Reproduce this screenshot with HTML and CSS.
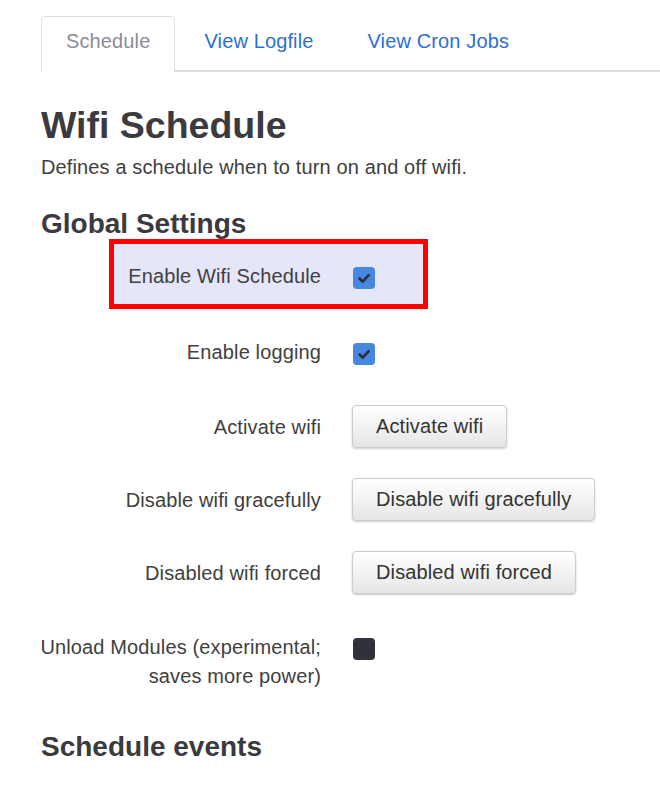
FILE: index.html
```html
<!DOCTYPE html>
<html lang="en">
<head>
    <meta charset="UTF-8">
    <meta name="viewport" content="width=device-width, initial-scale=1.0">
    <title>Wifi Schedule</title>
    <link rel="stylesheet" href="styles.css">
</head>
<body>
    <div class="page">
        <ul class="tabs">
            <li class="active"><a href="#">Schedule</a></li>
            <li><a href="#">View Logfile</a></li>
            <li><a href="#">View Cron Jobs</a></li>
        </ul>

        <h1>Wifi Schedule</h1>
        <p class="desc">Defines a schedule when to turn on and off wifi.</p>

        <h2 class="first">Global Settings</h2>

        <div class="row highlighted">
            <span class="mark"></span>
            <label class="label">Enable Wifi Schedule</label>
            <div class="field"><span class="check on"></span></div>
        </div>

        <div class="row tall">
            <label class="label">Enable logging</label>
            <div class="field"><span class="check on"></span></div>
        </div>

        <div class="row">
            <label class="label">Activate wifi</label>
            <div class="field"><button class="btn">Activate wifi</button></div>
        </div>

        <div class="row">
            <label class="label">Disable wifi gracefully</label>
            <div class="field"><button class="btn">Disable wifi gracefully</button></div>
        </div>

        <div class="row">
            <label class="label">Disabled wifi forced</label>
            <div class="field"><button class="btn">Disabled wifi forced</button></div>
        </div>

        <div class="row top">
            <label class="label">Unload Modules (experimental; saves more power)</label>
            <div class="field"><span class="check"></span></div>
        </div>

        <h2>Schedule events</h2>
    </div>
</body>
</html>
```

FILE: styles.css
```css
body {
    margin: 0;
    font-family: "Liberation Sans", Arial, sans-serif;
    font-size: 20px;
    letter-spacing: 0.13px;
    color: #404040;
    background-color: #fff;
}

.page {
    padding: 16px 0 0 41px;
}

/* tabs */
.tabs {
    list-style: none;
    margin: 0;
    padding: 0;
    display: flex;
    border-bottom: 2px solid #ddd;
}

.tabs li {
    margin: 0 4px -2px 0;
}

.tabs a {
    display: block;
    padding: 12px 24px 18px;
    line-height: 24px;
    color: #2c6fd6;
    text-decoration: none;
    border: 1px solid transparent;
    border-radius: 5px 5px 0 0;
}

.tabs li.active a {
    color: #8c8c96;
    background-color: #fff;
    border-color: #ddd;
    border-bottom-color: #fff;
}

h1 {
    font-size: 37.5px;
    line-height: 41px;
    letter-spacing: 0;
    margin: 33px 0 0;
    color: #3a3a3f;
}

.desc {
    margin: 7px 0 0;
    line-height: 28px;
}

h2 {
    font-size: 28px;
    line-height: 31px;
    letter-spacing: 0;
    margin: 40px 0 0;
    color: #3a3a3f;
}

h2.first {
    margin-top: 27px;
}

/* form rows */
.row {
    display: flex;
    align-items: center;
    gap: 31px;
    padding: 15px 0;
    margin-left: -6px;
    min-height: 43px;
    position: relative;
}

.row.tall {
    padding-bottom: 17px;
}

.row.top {
    align-items: flex-start;
    padding-top: 24px;
    padding-bottom: 0;
}

.row.highlighted {
    margin-bottom: 3px;
}

.mark {
    position: absolute;
    left: 74px;
    top: 0;
    width: 309px;
    height: 60px;
    border: 5px solid #ff0000;
    background-color: #e6e6fa;
    z-index: -1;
}

.label {
    width: 286px;
    flex: none;
    text-align: right;
    line-height: 28px;
}

.row.top .label {
    line-height: 29px;
}

.field {
    display: flex;
    align-items: center;
}

.check {
    display: block;
    width: 22px;
    height: 22px;
    border-radius: 4px;
    background-color: #2f313b;
    margin: 4px 0 0 1px;
}

.row.top .check {
    margin-top: 5px;
}

.check.on {
    background-color: #4688e0;
    background-image: url("data:image/svg+xml,%3Csvg xmlns='http://www.w3.org/2000/svg' viewBox='0 0 22 22'%3E%3Cpath d='M6.5 11.5l3.2 3.2 6-6.5' fill='none' stroke='%232b2b3a' stroke-width='2.6' stroke-linecap='round' stroke-linejoin='round'/%3E%3C/svg%3E");
}

.btn {
    font-family: inherit;
    font-size: 20px;
    letter-spacing: 0.13px;
    line-height: 23px;
    color: #333;
    padding: 9px 23px;
    border: 1px solid #ccc;
    border-radius: 4px;
    background: linear-gradient(#fff, #e6e6e6);
    box-shadow: 0 1px 2px rgba(0, 0, 0, 0.2);
}
```
